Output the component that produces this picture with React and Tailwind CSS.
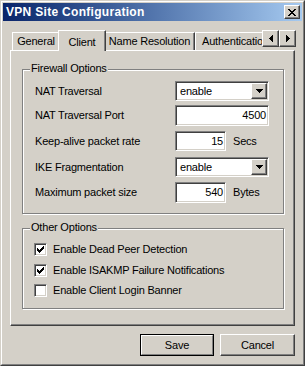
import React from "react";

const raised =
  "border border-t-white border-l-white border-r-[#404040] border-b-[#404040] shadow-[inset_-1px_-1px_0_#808080]";
const sunken =
  "border border-t-[#808080] border-l-[#808080] border-r-white border-b-white shadow-[inset_1px_1px_0_#404040,inset_-1px_-1px_0_#d4d0c8]";

function DownTri() {
  return (
    <svg width="7" height="4" viewBox="0 0 7 4" shapeRendering="crispEdges">
      <path d="M0 0h7v1H0zM1 1h5v1H1zM2 2h3v1H2zM3 3h1v1H3z" fill="#000" />
    </svg>
  );
}

function Dropdown({ value }) {
  return (
    <div className={`w-[94px] h-[20px] bg-white p-px ${sunken}`}>
      <div className="flex h-full items-center">
        <span className="flex-1 pl-[3px] leading-none">{value}</span>
        <div className={`w-[16px] h-full bg-[#d4d0c8] flex items-center justify-center ${raised}`}>
          <DownTri />
        </div>
      </div>
    </div>
  );
}

function Field({ value, w, h }) {
  return (
    <div className={`${w} ${h} bg-white ${sunken} flex items-center justify-end pr-[2px]`}>
      <span className="leading-none">{value}</span>
    </div>
  );
}

function Check({ checked }) {
  return (
    <div className={`w-[13px] h-[13px] bg-white ${sunken} flex items-center justify-center`}>
      {checked && (
        <svg width="7" height="7" viewBox="0 0 7 7" shapeRendering="crispEdges">
          <path
            d="M6 0h1v1H6zM5 1h2v1H5zM0 2h1v1H0zM4 2h3v1H4zM0 3h2v1H0zM3 3h3v1H3zM0 4h5v1H0zM1 5h3v1H1zM2 6h1v1H2z"
            fill="#000"
          />
        </svg>
      )}
    </div>
  );
}

function Group({ title, className, children }) {
  return (
    <div
      className={`relative w-[262px] border border-[#808080] shadow-[inset_1px_1px_0_#fff,1px_1px_0_#fff] ${className}`}
    >
      <span className="absolute left-[7px] top-[-8px] px-[1px] bg-[#d4d0c8] leading-[13px]">
        {title}
      </span>
      {children}
    </div>
  );
}

export default function App() {
  const rows = [
    { label: "NAT Traversal", mt: "mt-0", ctl: <Dropdown value="enable" /> },
    { label: "NAT Traversal Port", mt: "mt-[4px]", ctl: <Field value="4500" w="w-[94px]" h="h-[21px]" /> },
    {
      label: "Keep-alive packet rate",
      mt: "mt-[5px]",
      ctl: (
        <div className="flex items-center gap-[7px]">
          <Field value="15" w="w-[51px]" h="h-[20px]" />
          <span>Secs</span>
        </div>
      ),
    },
    { label: "IKE Fragmentation", mt: "mt-[6px]", ctl: <Dropdown value="enable" /> },
    {
      label: "Maximum packet size",
      mt: "mt-[5px]",
      ctl: (
        <div className="flex items-center gap-[7px]">
          <Field value="540" w="w-[51px]" h="h-[21px]" />
          <span>Bytes</span>
        </div>
      ),
    },
  ];

  const checks = [
    { label: "Enable Dead Peer Detection", checked: true, mt: "mt-0" },
    { label: "Enable ISAKMP Failure Notifications", checked: true, mt: "mt-[8px]" },
    { label: "Enable Client Login Banner", checked: false, mt: "mt-[7px]" },
  ];

  return (
    <div className="w-[305px] h-[366px] bg-[#d4d0c8] border border-t-[#d4d0c8] border-l-[#d4d0c8] border-r-[#404040] border-b-[#404040] font-['Liberation_Sans','Arial',sans-serif] text-[11px] tracking-[-0.2px] text-black">
      <div className="h-full border border-t-white border-l-white border-r-[#808080] border-b-[#808080] p-px flex flex-col">
        {/* Title bar */}
        <div className="h-[18px] shrink-0 bg-linear-to-r from-[#0a246a] to-[#a6caf0] flex items-center pl-[3px] pr-[2px]">
          <span className="flex-1 text-white font-bold text-[12px] tracking-[0.3px] leading-none">
            VPN Site Configuration
          </span>
          <div className={`w-[16px] h-[14px] bg-[#d4d0c8] flex items-center justify-center ${raised}`}>
            <svg width="8" height="7" viewBox="0 0 8 7" shapeRendering="crispEdges">
              <path
                d="M0 0h2v1H0zM6 0h2v1H6zM1 1h2v1H1zM5 1h2v1H5zM2 2h4v1H2zM3 3h2v1H3zM2 4h4v1H2zM1 5h2v1H1zM5 5h2v1H5zM0 6h2v1H0zM6 6h2v1H6z"
                fill="#000"
              />
            </svg>
          </div>
        </div>

        {/* Tabs */}
        <div className="mt-[9px] ml-[7px] w-[285px] relative">
          <div className="flex items-end h-[20px] pl-[2px]">
            <div className="h-[18px] w-[48px] shrink-0 border-t border-l border-r border-t-white border-l-white border-r-[#404040] shadow-[inset_-1px_0_0_#808080] flex items-center justify-center">
              General
            </div>
            <div className="relative z-10 h-[21px] mb-[-1px] w-[48px] shrink-0 ml-[-2px] mr-[-2px] bg-[#d4d0c8] border-t border-l border-r border-t-white border-l-white border-r-[#404040] shadow-[inset_-1px_0_0_#808080] flex items-start justify-center pt-[3px]">
              Client
            </div>
            <div className="h-[18px] w-[91px] shrink-0 border-t border-l border-r border-t-white border-l-white border-r-[#404040] shadow-[inset_-1px_0_0_#808080] flex items-center justify-center">
              Name Resolution
            </div>
            <div className="h-[18px] w-[88px] shrink-0 border-t border-l border-t-white border-l-white flex items-center pl-[6px] whitespace-nowrap overflow-hidden">
              Authentication
            </div>
          </div>
          <div className="absolute right-[-1px] top-0 z-20 flex">
            <div className={`w-[17px] h-[17px] bg-[#d4d0c8] flex items-center justify-center ${raised}`}>
              <svg width="4" height="7" viewBox="0 0 4 7" shapeRendering="crispEdges">
                <path d="M3 0h1v7H3zM2 1h1v5H2zM1 2h1v3H1zM0 3h1v1H0z" fill="#000" />
              </svg>
            </div>
            <div className={`w-[17px] h-[17px] bg-[#d4d0c8] flex items-center justify-center ${raised}`}>
              <svg width="4" height="7" viewBox="0 0 4 7" shapeRendering="crispEdges">
                <path d="M0 0h1v7H0zM1 1h1v5H1zM2 2h1v3H2zM3 3h1v1H3z" fill="#000" />
              </svg>
            </div>
          </div>

          {/* Panel */}
          <div className="h-[276px] border border-t-white border-l-white border-r-[#404040] border-b-[#404040] shadow-[inset_-1px_-1px_0_#808080] pt-[18px] pl-[11px]">
            <Group title="Firewall Options" className="h-[145px] pt-[11px] pl-[12px]">
              {rows.map((r) => (
                <div key={r.label} className={`flex items-center ${r.mt}`}>
                  <span className="w-[140px] shrink-0">{r.label}</span>
                  {r.ctl}
                </div>
              ))}
            </Group>
            <Group title="Other Options" className="h-[81px] mt-[14px] pt-[14px] pl-[11px]">
              {checks.map((c) => (
                <div key={c.label} className={`flex items-center gap-[6px] h-[13px] ${c.mt}`}>
                  <Check checked={c.checked} />
                  <span className="leading-none">{c.label}</span>
                </div>
              ))}
            </Group>
          </div>
        </div>

        {/* Buttons */}
        <div className="mt-[8px] ml-[7px] w-[285px] flex justify-end gap-[6px]">
          <div className="w-[74px] h-[22px] border border-black">
            <div className="h-full border border-t-white border-l-white border-r-[#808080] border-b-[#808080] flex items-center justify-center">
              Save
            </div>
          </div>
          <div className={`w-[75px] h-[22px] flex items-center justify-center ${raised}`}>Cancel</div>
        </div>
      </div>
    </div>
  );
}
